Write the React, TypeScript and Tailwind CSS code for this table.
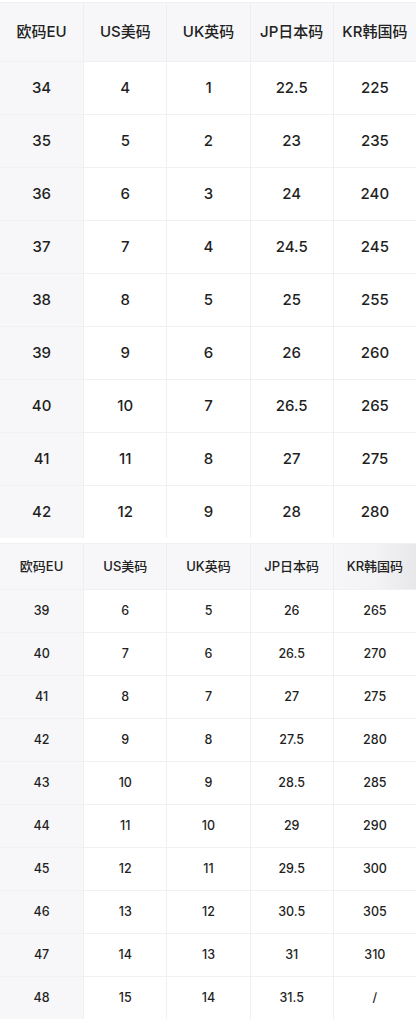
import React from 'react'

const headers = ['欧码EU', 'US美码', 'UK英码', 'JP日本码', 'KR韩国码']

const tableA = [
  ['34', '4', '1', '22.5', '225'],
  ['35', '5', '2', '23', '235'],
  ['36', '6', '3', '24', '240'],
  ['37', '7', '4', '24.5', '245'],
  ['38', '8', '5', '25', '255'],
  ['39', '9', '6', '26', '260'],
  ['40', '10', '7', '26.5', '265'],
  ['41', '11', '8', '27', '275'],
  ['42', '12', '9', '28', '280'],
]

const tableB = [
  ['39', '6', '5', '26', '265'],
  ['40', '7', '6', '26.5', '270'],
  ['41', '8', '7', '27', '275'],
  ['42', '9', '8', '27.5', '280'],
  ['43', '10', '9', '28.5', '285'],
  ['44', '11', '10', '29', '290'],
  ['45', '12', '11', '29.5', '300'],
  ['46', '13', '12', '30.5', '305'],
  ['47', '14', '13', '31', '310'],
  ['48', '15', '14', '31.5', '/'],
]

const font = { fontFamily: 'Inter, "Noto Sans CJK SC", sans-serif' }

const SizeTable = ({ rows, big }: { rows: string[][]; big?: boolean }) => (
  <div className="w-full border-t border-[#f1f1f3]">
    <div className={`grid grid-cols-5 bg-[#f7f7f9] font-medium ${big ? 'h-[58px] text-[15px]' : 'h-[45px] text-[13px]'}`}>
      {headers.map((h, i) => (
        <div
          key={h}
          className={`flex items-center justify-center text-[#222] ${i > 0 ? 'border-l border-[#eeeef0]' : ''} ${i === 4 && !big ? 'bg-gradient-to-r from-[#f7f7f9] via-[#f3f3f5] to-[#e8e8eb]' : ''}`}
        >
          {h}
        </div>
      ))}
    </div>
    {rows.map((r, ri) => (
      <div
        key={ri}
        className={`grid grid-cols-5 border-t border-[#f1f1f3] font-medium ${big ? 'h-[53px] text-[15px]' : 'h-[43px] text-[12.5px]'}`}
      >
        {r.map((c, ci) => (
          <div
            key={ci}
            className={`flex items-center justify-center text-[#1f1f1f] ${ci === 0 ? 'bg-[#f7f7f9]' : 'bg-white border-l border-[#f0f0f2]'}`}
          >
            {c}
          </div>
        ))}
      </div>
    ))}
  </div>
)

export default function App() {
  return (
    <div className="w-[416px] h-[1034px] bg-white overflow-hidden" style={font}>
      <div className="pt-[2px]">
        <SizeTable rows={tableA} big />
      </div>
      <div className="pt-[5px]">
        <SizeTable rows={tableB} />
      </div>
    </div>
  )
}
